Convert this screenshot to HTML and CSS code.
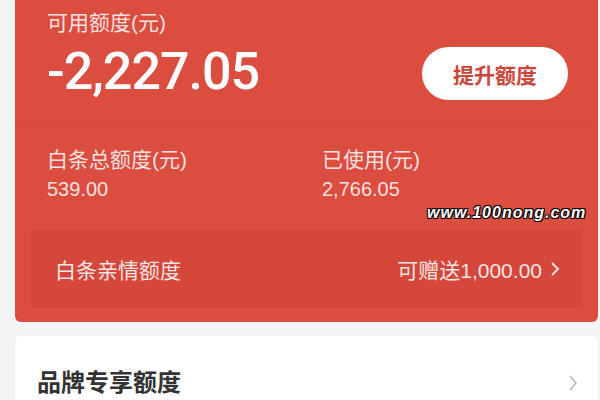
FILE: index.html
```html
<!DOCTYPE html>
<html lang="zh">
<head>
    <meta charset="UTF-8">
    <meta name="viewport" content="width=device-width, initial-scale=1.0">
    <title>白条额度</title>
    <link rel="stylesheet" href="styles.css">
</head>
<body>
    <div class="page">
        <div class="quota-card">
            <div class="quota-top">
                <div class="quota-main">
                    <div class="label">可用额度(元)</div>
                    <div class="amount">-2,227.05</div>
                </div>
                <button class="raise-btn">提升额度</button>
            </div>

            <div class="quota-stats">
                <div class="stat">
                    <div class="stat-label">白条总额度(元)</div>
                    <div class="stat-value">539.00</div>
                </div>
                <div class="stat">
                    <div class="stat-label">已使用(元)</div>
                    <div class="stat-value">2,766.05</div>
                </div>
            </div>

            <div class="family-row">
                <span>白条亲情额度</span>
                <span class="family-gift">可赠送1,000.00
                    <svg class="chev" width="10" height="16" viewBox="0 0 10 16"><path d="M2 2l6 6-6 6" fill="none" stroke="currentColor" stroke-width="1.8"/></svg>
                </span>
            </div>
        </div>

        <div class="brand-card">
            <span class="brand-title">品牌专享额度</span>
            <svg class="chev-grey" width="10" height="18" viewBox="0 0 10 18"><path d="M2 2l6 7-6 7" fill="none" stroke="currentColor" stroke-width="1.6"/></svg>
        </div>

        <div class="watermark">www.100nong.com</div>
    </div>
</body>
</html>
```

FILE: styles.css
```css
body {
    margin: 0;
    background-color: #f3f4f6;
    font-family: "Liberation Sans", "Noto Sans CJK SC", sans-serif;
}
.page {
    position: relative;
    width: 600px;
    height: 400px;
    overflow: hidden;
    padding: 0 2px 0 15px;
    box-sizing: border-box;
}
.quota-card {
    background-color: #db4d3f; /* rosso principale */
    border-radius: 0 0 6px 6px;
    padding-bottom: 14px;
}
.quota-top {
    display: flex;
    align-items: flex-start;
    justify-content: space-between;
    height: 122px;
    padding: 0 30px 0 32px;
    border-bottom: 1px solid #d34639;
}
.quota-main {
    padding-top: 8px;
}
.label {
    color: rgba(255, 255, 255, 0.85);
    font-size: 21px;
    line-height: 29px;
}
.amount {
    color: #fff;
    font-family: Roboto, sans-serif;
    font-size: 52px;
    font-weight: 500;
    line-height: 70px;
    letter-spacing: -1px;
}
.raise-btn {
    width: 146px;
    height: 53px;
    margin-top: 47px;
    border: none;
    border-radius: 27px;
    background-color: #fff;
    color: #cd463a;
    font-family: inherit;
    font-size: 21px;
    font-weight: bold;
}
.quota-stats {
    display: grid;
    grid-template-columns: 275px 1fr;
    padding: 23px 32px 0;
    height: 84px;
}
.stat-label {
    color: rgba(255, 255, 255, 0.85);
    font-size: 21px;
    line-height: 28px;
}
.stat-value {
    color: rgba(255, 255, 255, 0.85);
    font-size: 20px;
    line-height: 30px;
}
.family-row {
    display: flex;
    align-items: center;
    justify-content: space-between;
    height: 78px;
    margin: 0 16px;
    padding: 0 22px 0 24px;
    background-color: #d5473a; /* riquadro interno */
    color: rgba(255, 255, 255, 0.88);
    font-size: 21px;
}
.family-gift {
    display: flex;
    align-items: center;
    gap: 8px;
}
.brand-card {
    display: flex;
    align-items: flex-start;
    justify-content: space-between;
    margin-top: 14px;
    height: 90px;
    padding: 30px 20px 0 22px;
    background-color: #fff;
    border-radius: 6px;
    box-sizing: border-box;
}
.brand-title {
    color: #333;
    font-size: 24px;
    font-weight: bold;
    line-height: 34px;
}
.chev-grey {
    color: #b5b5b5;
    margin-top: 8px;
}
.watermark {
    position: absolute;
    left: 427px;
    top: 204px;
    color: #fff;
    font-size: 16px;
    font-weight: bold;
    font-style: italic;
    letter-spacing: 1px;
    text-shadow: 1px 1px 0 #000, -1px -1px 0 #000, 1px -1px 0 #000, -1px 1px 0 #000;
}
```
